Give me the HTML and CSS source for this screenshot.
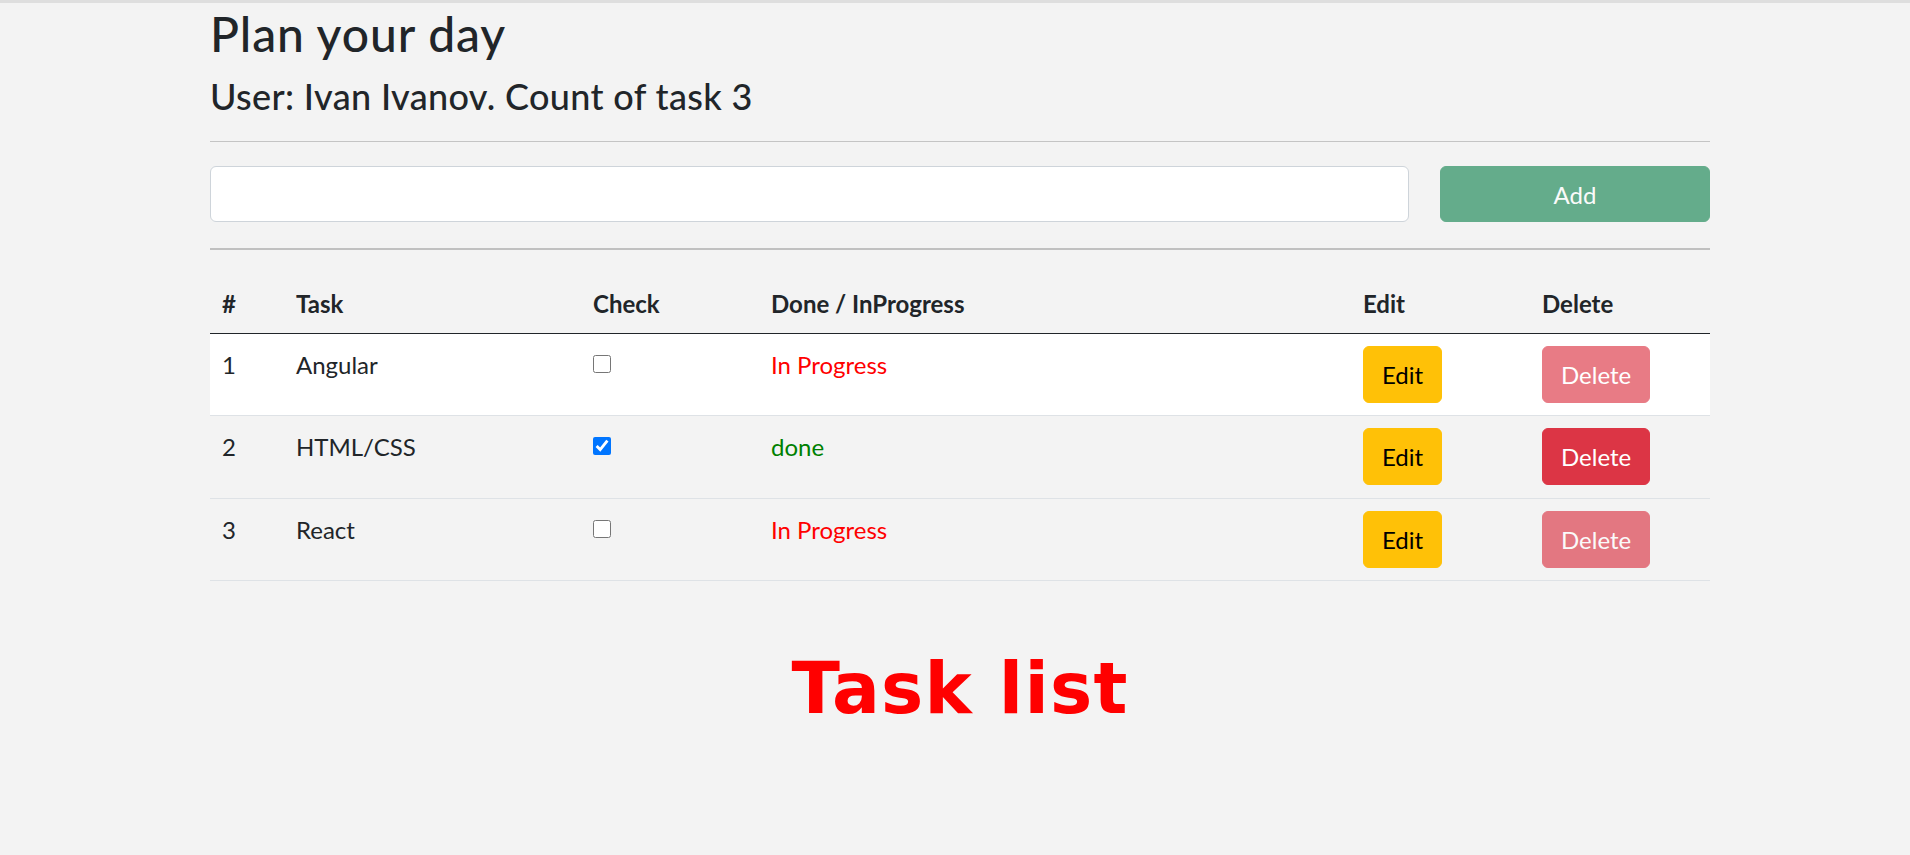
FILE: index.html
```html
<!DOCTYPE html>
<html lang="en">
<head>
<meta charset="utf-8">
<title>Plan your day</title>
<link rel="stylesheet" href="styles.css">
</head>
<body>
<main class="page">
  <h1 class="title">Plan your day</h1>
  <h4 class="subtitle">User: Ivan Ivanov. Count of task 3</h4>
  <hr class="rule">
  <form class="add-row">
    <input class="task-input" type="text">
    <button class="btn btn-add" type="button" disabled>Add</button>
  </form>
  <hr class="rule rule-thick">
  <table class="tasks">
    <colgroup>
      <col class="c-num"><col class="c-task"><col class="c-check"><col class="c-status"><col class="c-edit"><col class="c-del">
    </colgroup>
    <thead>
      <tr><th>#</th><th>Task</th><th>Check</th><th>Done / InProgress</th><th>Edit</th><th>Delete</th></tr>
    </thead>
    <tbody>
      <tr class="row-active">
        <td>1</td><td>Angular</td>
        <td><input class="check" type="checkbox"></td>
        <td class="status-progress">In Progress</td>
        <td><button class="btn btn-edit" type="button">Edit</button></td>
        <td><button class="btn btn-del" type="button" disabled>Delete</button></td>
      </tr>
      <tr>
        <td>2</td><td>HTML/CSS</td>
        <td><input class="check" type="checkbox" checked></td>
        <td class="status-done">done</td>
        <td><button class="btn btn-edit" type="button">Edit</button></td>
        <td><button class="btn btn-del" type="button">Delete</button></td>
      </tr>
      <tr>
        <td>3</td><td>React</td>
        <td><input class="check" type="checkbox"></td>
        <td class="status-progress">In Progress</td>
        <td><button class="btn btn-edit" type="button">Edit</button></td>
        <td><button class="btn btn-del" type="button" disabled>Delete</button></td>
      </tr>
    </tbody>
  </table>
  <h1 class="banner">Task list</h1>
</main>
</body>
</html>
```

FILE: styles.css
```css
html, body {
  margin: 0;
  padding: 0;
}
body {
  background: #f3f3f3;
  border-top: 3px solid #dedede;
  font-family: Lato, "Open Sans", sans-serif;
  font-size: 24px;
  line-height: 1.5;
  color: #212529;
}
.page {
  margin: 0 200px 0 210px;
}
.title {
  margin: 2px 0 12px;
  font-size: 48px;
  font-weight: 500;
  line-height: 1.2;
  letter-spacing: 0.9px;
}
.subtitle {
  margin: 0;
  font-size: 36px;
  font-weight: 500;
  line-height: 1.2;
  letter-spacing: 0.35px;
}
.rule {
  margin: 23px 0 24px;
  border: 0;
  border-top: 1px solid #c4c4c4;
  height: 0;
}
.rule-thick {
  margin: 26px 0 23px;
  border-top: 2px solid #c0c0c0;
}
.add-row {
  display: flex;
  gap: 31px;
  margin: 0;
}
.task-input {
  flex: 1;
  height: 56px;
  box-sizing: border-box;
  border: 1px solid #ced4da;
  border-radius: 6px;
  background: #fff;
  font: inherit;
  padding: 0 18px;
}
.btn {
  box-sizing: border-box;
  border: 1px solid transparent;
  border-radius: 6px;
  font-family: inherit;
  font-size: 24px;
  line-height: 36px;
  padding: 10px 18px 9px;
  cursor: pointer;
}
.btn:disabled {
  opacity: 0.65;
}
.btn-add {
  width: 270px;
  height: 56px;
  background: #198754;
  border-color: #198754;
  color: #fff;
  padding-top: 10px;
  padding-bottom: 8px;
}
.tasks {
  width: 100%;
  table-layout: fixed;
  border-collapse: collapse;
  vertical-align: top;
}
.c-num { width: 74px; }
.c-task { width: 297px; }
.c-check { width: 178px; }
.c-status { width: 592px; }
.c-edit { width: 179px; }
.c-del { width: 180px; }
.tasks th {
  text-align: left;
  font-weight: 700;
  padding: 13px 12px 11px;
  line-height: 36px;
  border-bottom: 1px solid #212529;
  vertical-align: top;
}
.tasks td {
  padding: 13px 12px 11.5px;
  line-height: 36px;
  border-bottom: 1px solid #dee2e6;
  vertical-align: top;
}
.row-active td {
  background: #fff;
}
.tasks td .btn {
  height: 57px;
  margin: -1px 0 1px;
  vertical-align: top;
}
.check {
  width: 18px;
  height: 18px;
  margin: 8px 0 0;
  vertical-align: top;
  accent-color: #0075ff;
}
.status-progress { color: #ff0000; }
.status-done { color: #008000; }
.btn-edit {
  background: #ffc107;
  border-color: #ffc107;
  color: #000;
}
.btn-del {
  background: #dc3545;
  border-color: #dc3545;
  color: #fff;
}
.banner {
  margin: 65px 0 0;
  text-align: center;
  font-family: "DejaVu Sans", sans-serif;
  font-weight: 700;
  font-size: 71px;
  line-height: 1.2;
  letter-spacing: 1.2px;
  color: #ff0000;
}
```
